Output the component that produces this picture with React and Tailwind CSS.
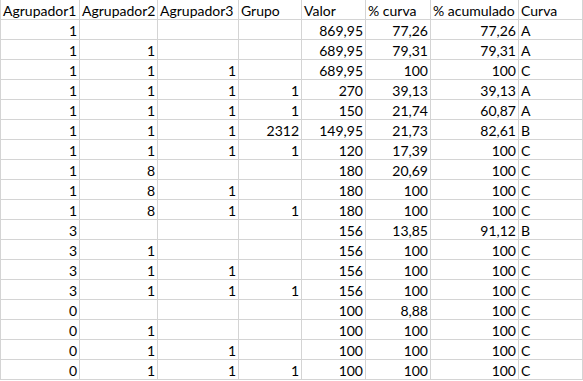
const headers = [
  "Agrupador1",
  "Agrupador2",
  "Agrupador3",
  "Grupo",
  "Valor",
  "% curva",
  "% acumulado",
  "Curva",
];

const widths = [
  "w-[80px]",
  "w-[78px]",
  "w-[81px]",
  "w-[63px]",
  "w-[64px]",
  "w-[65px]",
  "w-[88px]",
  "w-[64px]",
];

const rows = [
  ["1", "", "", "", "869,95", "77,26", "77,26", "A"],
  ["1", "1", "", "", "689,95", "79,31", "79,31", "A"],
  ["1", "1", "1", "", "689,95", "100", "100", "C"],
  ["1", "1", "1", "1", "270", "39,13", "39,13", "A"],
  ["1", "1", "1", "1", "150", "21,74", "60,87", "A"],
  ["1", "1", "1", "2312", "149,95", "21,73", "82,61", "B"],
  ["1", "1", "1", "1", "120", "17,39", "100", "C"],
  ["1", "8", "", "", "180", "20,69", "100", "C"],
  ["1", "8", "1", "", "180", "100", "100", "C"],
  ["1", "8", "1", "1", "180", "100", "100", "C"],
  ["3", "", "", "", "156", "13,85", "91,12", "B"],
  ["3", "1", "", "", "156", "100", "100", "C"],
  ["3", "1", "1", "", "156", "100", "100", "C"],
  ["3", "1", "1", "1", "156", "100", "100", "C"],
  ["0", "", "", "", "100", "8,88", "100", "C"],
  ["0", "1", "", "", "100", "100", "100", "C"],
  ["0", "1", "1", "", "100", "100", "100", "C"],
  ["0", "1", "1", "1", "100", "100", "100", "C"],
];

function Cell({ children, index, right }) {
  return (
    <div
      className={`${widths[index]} h-[20px] shrink-0 border-r border-b border-[#d4d4d4] px-[2px] pt-[1px] leading-[19px] whitespace-nowrap ${
        right ? "text-right" : "text-left"
      } ${index === 0 ? "border-l" : ""}`}
    >
      {children}
    </div>
  );
}

export default function App() {
  return (
    <div className="w-[583px] h-[381px] overflow-hidden bg-white text-black text-[14px] font-['Lato','Liberation_Sans',sans-serif]">
      <div className="flex">
        {headers.map((h, i) => (
          <Cell key={h} index={i}>
            {h}
          </Cell>
        ))}
      </div>
      {rows.map((r, ri) => (
        <div key={ri} className="flex">
          {r.map((v, i) => (
            <Cell key={i} index={i} right={i < 7}>
              {v}
            </Cell>
          ))}
        </div>
      ))}
    </div>
  );
}
